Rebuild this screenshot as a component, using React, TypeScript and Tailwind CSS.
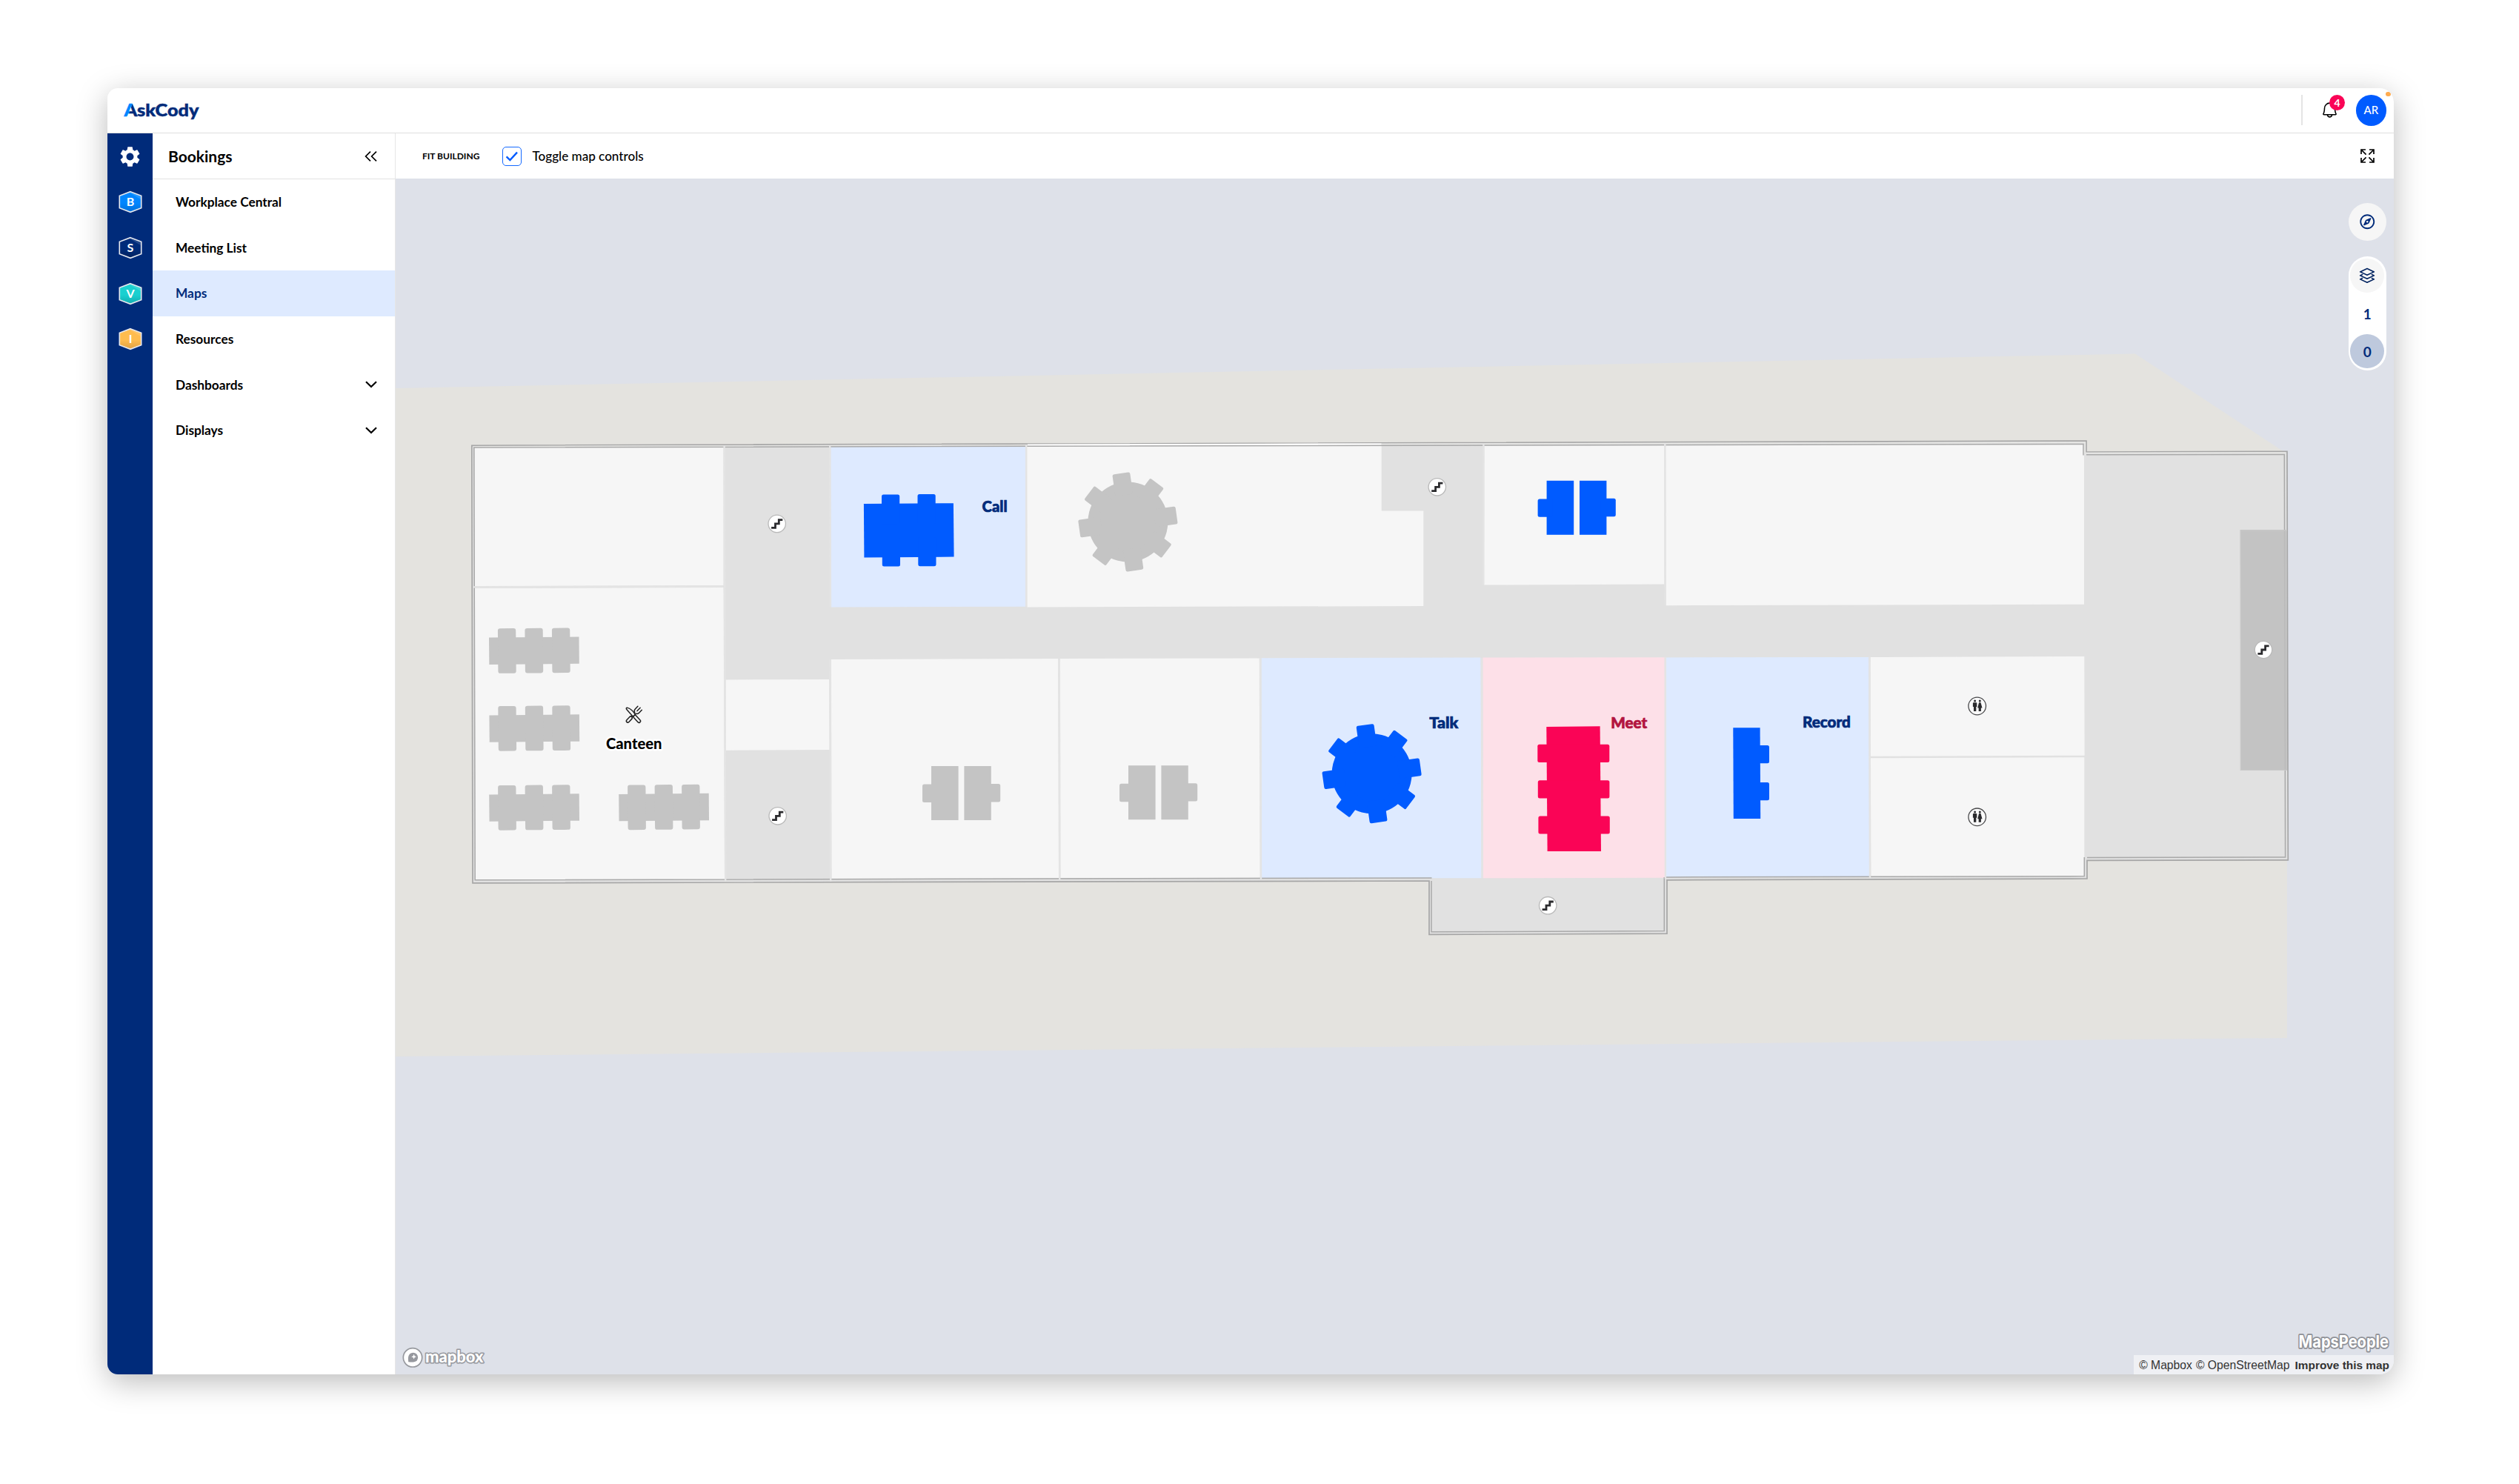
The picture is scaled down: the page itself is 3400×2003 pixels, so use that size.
import React from "react";
import { MdSettings } from "react-icons/md";
import { FaRegCompass } from "react-icons/fa";
import { PiBell } from "react-icons/pi";

const GRAY = "#c4c4c4";
const BLUE = "#005bff";
const RED = "#fa0456";

function Hexagon({ id, letter, from, to }: { id: string; letter: string; from: string; to: string }) {
  return (
    <svg width="32" height="31" viewBox="-16 -15.5 32 31">
      <defs>
        <linearGradient id={id} x1="0" y1="0" x2="0" y2="1">
          <stop offset="0.55" stopColor={from} />
          <stop offset="1" stopColor={to} />
        </linearGradient>
      </defs>
      <path d="M0 -13.8 L14.7 -8.3 V8.3 L0 13.8 L-14.7 8.3 V-8.3 Z" fill={`url(#${id})`} />
      <path d="M0 -13.8 L14.7 -8.3 V-3 L-2 -13 Z" fill="#fff" opacity="0.14" />
      <path d="M0 -13.8 L14.7 -8.3 V8.3 L0 13.8 L-14.7 8.3 V-8.3 Z" fill="none" stroke="#e6e8ee" strokeWidth="1.6" />
      <text x="0" y="5.9" textAnchor="middle" fill="#fff" className="font-['Lato'] text-[16px] font-bold">
        {letter}
      </text>
    </svg>
  );
}

function Chevron() {
  return (
    <svg width="16" height="10" viewBox="0 0 16 10" fill="none" stroke="#000" strokeWidth="2.2">
      <path d="M1 1.2 L8 8 L15 1.2" />
    </svg>
  );
}

function NavItem({ label, active, expandable }: { label: string; active?: boolean; expandable?: boolean }) {
  return (
    <div
      className={
        active
          ? "flex h-[61.6px] items-center justify-between bg-[#deeaff] pl-[31px] pr-[24.5px] text-[#002b7a]"
          : "flex h-[61.6px] items-center justify-between pl-[31px] pr-[24.5px] text-black"
      }
    >
      <span className="text-[17.3px] font-bold leading-none">{label}</span>
      {expandable && <Chevron />}
    </div>
  );
}

function Table3({ x, y }: { x: number; y: number }) {
  return (
    <g transform={`translate(${x} ${y}) rotate(-0.5)`} fill={GRAY}>
      <rect width="121.5" height="36.3" />
      {[12, 48.5, 85].map((sx) => (
        <rect key={sx} x={sx} y="-12.2" width="24.3" height="60.6" rx="3" />
      ))}
    </g>
  );
}

function DeskPair({ x, y, fill }: { x: number; y: number; fill: string }) {
  return (
    <g transform={`translate(${x} ${y})`} fill={fill}>
      <rect x="12" width="36.6" height="73" />
      <rect x="56.4" width="36.4" height="73" />
      <rect x="0" y="24.6" width="20" height="24.4" rx="2.5" />
      <rect x="85" y="24" width="20.2" height="24.4" rx="2.5" />
    </g>
  );
}

function RoundTable({ x, y, fill }: { x: number; y: number; fill: string }) {
  return (
    <g transform={`translate(${x} ${y}) rotate(-8)`} fill={fill}>
      <circle r="54" />
      {[0, 90, 180, 270].map((a) => (
        <rect key={a} x="-12" y="-66.3" width="24" height="30" rx="2.5" transform={`rotate(${a})`} />
      ))}
      {[45, 135, 225, 315].map((a) => (
        <rect key={a} x="-11.6" y="-65.4" width="23.2" height="30" rx="2" transform={`rotate(${a})`} />
      ))}
    </g>
  );
}

function Stairs({ x, y }: { x: number; y: number }) {
  return (
    <g transform={`translate(${x} ${y})`}>
      <circle r="11.7" fill="#fff" stroke="#b9b9b9" strokeWidth="1.3" />
      <path d="M-7.6 5.4 H-2.2 V0 H2.6 V-5.2 H7.6" fill="none" stroke="#2b2b2e" strokeWidth="2.8" />
    </g>
  );
}

function Restroom({ x, y }: { x: number; y: number }) {
  return (
    <g transform={`translate(${x} ${y})`} fill="#2b2b2e">
      <circle r="11.8" fill="#fafafa" stroke="#4a4a4c" strokeWidth="1.3" />
      <circle cx="-3.1" cy="-6.9" r="1.5" />
      <path d="M-5 -4.7 H-1.2 Q-0.4 -4.7 -0.4 -4 V1 H-1.4 V7 H-4.7 V1 H-5.8 V-4 Q-5.8 -4.7 -5 -4.7 Z" />
      <circle cx="3.6" cy="-6.9" r="1.5" />
      <path d="M2.4 -4.7 H4.8 L6.8 2.4 H5.2 V7 H2 V2.4 H0.5 Z" />
    </g>
  );
}

function Cutlery() {
  return (
    <g transform="translate(855 965)" fill="#f6f6f6" stroke="#222" strokeWidth="1.5" strokeLinejoin="round" strokeLinecap="round">
      <g transform="rotate(43)">
        <rect x="-2" y="3.5" width="4" height="9.6" rx="2" />
        <path d="M-1.1 3 V-3.6 Q-3.7 -4.6 -3.7 -7.4 V-12.6 M1.1 3 V-3.6 Q3.7 -4.6 3.7 -7.4 V-12.6" />
        <path d="M0 -7.4 V-13.4" fill="none" />
      </g>
      <g transform="rotate(-42)">
        <path d="M-1.9 1.2 V-11 C-1.9 -13.6 -0.4 -14 0.6 -12.4 C2.8 -9 3.2 -4 2.2 1.2 Z" />
        <rect x="-2" y="1.2" width="4" height="12" rx="1.9" />
      </g>
    </g>
  );
}

function FloorMap() {
  return (
    <svg width="2697" height="1614" viewBox="534 241 2697 1614" className="block">
      <path d="M534 524 L2700 481 L2882 477.5 L3080 608 L3087 612 V1401 L534 1426 Z" fill="#e4e3df" />
      <path
        d="M636.8 601.3 L2816 595 V610 L3087 609.3 L3088.3 1160.8 L2817 1161.3 V1186 L2250 1187.8 V1260.2 L1929 1261.4 V1189 L638 1191.8 Z"
        fill="#e1e1e1"
        stroke="#a6a6a6"
        strokeWidth="1.7"
      />
      <path d="M638.5 602.7 L2814.4 597 V611.5 L3085.3 611" fill="none" stroke="#e6e6e4" strokeWidth="1.6" />
      <g fill="#f6f6f6">
        <path d="M640.5 604 L976.5 603 V790 L640.5 791 Z" />
        <path d="M641 794 L976.5 793 L978 1187 L641.5 1187.5 Z" />
        <path d="M979.7 917.5 L1119 917 L1119.5 1012 L979.7 1012.7 Z" />
        <path d="M1386 602 L1864.7 601 V689.5 H1921.3 V818 L1386.4 819.4 Z" />
        <path d="M2003.5 600.5 H2246.4 V788.6 L2003.2 789.5 Z" />
        <path d="M2248.3 600 L2813 599.5 V815.8 L2248.8 817.2 Z" />
        <path d="M1122 890 L1428 889 L1429 1186 H1122.5 Z" />
        <path d="M1431 889 L1699.7 888.5 L1700.7 1185.3 H1431.5 Z" />
        <path d="M2524.6 887 L2813.3 886 L2813.6 1019.7 L2525 1020.7 Z" />
        <path d="M2525 1023.3 L2813.3 1022.3 V1182.5 L2525.4 1183.3 Z" />
      </g>
      <g fill="#deeaff">
        <path d="M1121.3 603 L1384.3 602.3 V818.8 L1121.7 819.4 Z" />
        <path d="M1702.5 888.3 L1998.5 887.6 L1999.5 1185.3 H1703 Z" />
        <path d="M2248.6 887.4 L2522 887 L2523 1183.3 L2249 1183.8 Z" />
      </g>
      <path d="M2001.4 887.6 L2246.7 887.2 L2247 1184.8 L2002 1185.3 Z" fill="#fde0e8" />

      <g fill="none" stroke="#a9a9a9" strokeWidth="1.5">
        <path d="M2816 613.8 L3083.3 613.4 L3084.6 1156.9 L2817 1157.4" />
        <path d="M2813.3 1157 V1182.6 L2249 1183.9 M2246.3 1184 V1256.6 L1932 1257.8 V1189" />
        <path d="M1932.5 1184.9 L641.2 1187.7 L639.8 603.9 L2812 599.5 V614.5" />
      </g>
      <path d="M1387 600.4 L1864.5 599.3" stroke="#fff" strokeWidth="1.8" />
      <g stroke="#e4e4e4" strokeWidth="2.4">
        <path d="M977.6 601 L979.2 1190 M1120.2 601 L1121 819 M1120.6 890 L1121.2 1190 M1385.2 600 V819" />
        <path d="M1429.7 889 L1430.2 1188 M1701.3 888 L1702 1187 M2000 888 L2000.8 1185 M2002.4 599 L2002.2 789" />
        <path d="M2247.3 598 L2247.7 817 M2247.9 887 V1186 M2523.4 887 L2524 1185.6 M638.5 792.4 L976 791.5" />
      </g>
      <path d="M3023.7 715 H3087 V1040 H3024.3 Z" fill="#bdbdbd" fillOpacity="0.84" />
      <path d="M3087 716 L3024.2 716 V1039.5 H3087" fill="none" stroke="#cacaca" strokeWidth="1.2" />

      <Table3 x={660} y={860.6} />
      <Table3 x={660.4} y={965.4} />
      <Table3 x={660.2} y={1072.4} />
      <Table3 x={835.2} y={1071.9} />
      <DeskPair x={1245} y={1034} fill={GRAY} />
      <DeskPair x={1511} y={1033.2} fill={GRAY} />
      <RoundTable x={1522.4} y={704.5} fill={GRAY} />

      <DeskPair x={2075.6} y={648.8} fill={BLUE} />
      <RoundTable x={1851.6} y={1044.2} fill={BLUE} />
      <g fill={BLUE}>
        <path d="M1165.9 680 L1286.9 679.2 L1287.6 751.6 L1166.4 752.6 Z" />
        <rect x="1190" y="667.5" width="24.2" height="40" rx="2.5" />
        <rect x="1238.5" y="667" width="24.2" height="40" rx="2.5" />
        <rect x="1190.8" y="725" width="24.2" height="39.6" rx="2.5" />
        <rect x="1239.3" y="725" width="24.2" height="39.2" rx="2.5" />
        <path d="M2339.3 982.2 H2375.6 L2376.2 1105 H2339.8 Z" />
        <rect x="2360" y="1006" width="28" height="24.3" rx="2.5" />
        <rect x="2360" y="1056" width="28" height="24.3" rx="2.5" />
      </g>
      <g fill={RED}>
        <path d="M2087.3 981 L2159.6 980.2 L2161 1149 H2088.6 Z" />
        <rect x="2075.3" y="1004.8" width="97" height="24.2" rx="2.5" />
        <rect x="2075.8" y="1053.2" width="96.6" height="24.2" rx="2.5" />
        <rect x="2076.4" y="1101.4" width="96.4" height="24.2" rx="2.5" />
      </g>

      <Stairs x={1048.7} y={706.9} />
      <Stairs x={1049.7} y={1101.3} />
      <Stairs x={1939.8} y={657.3} />
      <Stairs x={2089.2} y={1222.2} />
      <Stairs x={3055} y={877} />
      <Restroom x={2668.7} y={953} />
      <Restroom x={2668.7} y={1102.8} />
      <Cutlery />

      <g className="font-['Lato'] text-[20.7px] font-black" strokeWidth="0.7">
        <text x="818" y="1011.3" textLength="75.5" lengthAdjust="spacingAndGlyphs" className="text-[21.4px]" fill="#000" stroke="#fff" strokeWidth="5" strokeLinejoin="round" paintOrder="stroke">
          Canteen
        </text>
        <text x="1325.6" y="691" textLength="34" lengthAdjust="spacingAndGlyphs" fill="#002b7a" stroke="#002b7a">Call</text>
        <text x="1929.3" y="983.2" textLength="39" lengthAdjust="spacingAndGlyphs" fill="#002b7a" stroke="#002b7a">Talk</text>
        <text x="2174.3" y="982.8" textLength="49" lengthAdjust="spacingAndGlyphs" fill="#b2153f" stroke="#b2153f">Meet</text>
        <text x="2432.9" y="982" textLength="65" lengthAdjust="spacingAndGlyphs" fill="#002b7a" stroke="#002b7a">Record</text>
      </g>
    </svg>
  );
}

function MapboxLogo() {
  return (
    <svg width="114" height="32" viewBox="0 0 114 32" className="overflow-visible">
      <circle cx="15" cy="15.3" r="12.7" fill="#fff" stroke="#96989e" strokeWidth="1.7" />
      <path d="M9.2 21.2 C8.6 16 8.9 12.6 11.2 10.3 A6.6 6.6 0 0 1 20.6 19.5 C18 21.8 14.4 21.9 9.2 21.2 Z" fill="#96989e" />
      <path d="M16.6 10.8 L17.6 13.2 L20 14.2 L17.6 15.2 L16.6 17.6 L15.6 15.2 L13.2 14.2 L15.6 13.2 Z" fill="#fff" />
      <text x="32" y="22" textLength="78.5" lengthAdjust="spacingAndGlyphs" fill="#fff" stroke="#96989e" strokeWidth="3.2" strokeLinejoin="round" paintOrder="stroke" className="font-['Lato'] text-[22.5px] font-black">
        mapbox
      </text>
    </svg>
  );
}

function Layers() {
  return (
    <svg width="24" height="24" viewBox="0 0 24 24" fill="none" stroke="#00225f" strokeWidth="1.6" strokeLinejoin="round" strokeLinecap="round">
      <path d="M12 2.6 L21.4 6.9 L12 11.3 L2.6 6.9 Z" />
      <path d="M5.6 10.5 L2.6 11.9 L12 16.3 L21.4 11.9 L18.4 10.5" />
      <path d="M5.6 15.5 L2.6 16.9 L12 21.3 L21.4 16.9 L18.4 15.5" />
    </svg>
  );
}

export default function App() {
  return (
    <div className="h-[2003px] w-[3400px] overflow-hidden bg-white pl-[145px] pt-[119px] font-['Lato',sans-serif]">
      <div className="flex h-[1736px] w-[3086px] flex-col overflow-hidden rounded-l-[14px] rounded-r-[19px] bg-white shadow-[0_10px_42px_rgba(0,0,0,0.27)]">
        <header className="relative flex h-[61px] shrink-0 items-center justify-between border-b border-[#dfdfdf] pl-[20px] pr-[10px]">
          <svg width="110" height="40" viewBox="0 0 110 40">
            <defs>
              <linearGradient id="brand" gradientUnits="userSpaceOnUse" x1="0" y1="22" x2="20" y2="29">
                <stop offset="0.44" stopColor="#0086ff" />
                <stop offset="0.45" stopColor="#002b7a" />
              </linearGradient>
            </defs>
            <text x="2.4" y="28.3" fill="url(#brand)" stroke="url(#brand)" strokeWidth="0.5" textLength="101" lengthAdjust="spacingAndGlyphs" className="font-['Lato'] text-[23.3px] font-black">
              AskCody
            </text>
          </svg>
          <div className="flex items-center">
            <div className="h-[41px] w-[2px] bg-[#e4e4e4]" />
            <div className="relative ml-[24px] flex h-[26px] w-[26px] items-center justify-center">
              <PiBell size={25} color="#000" />
              <span className="absolute left-[12.5px] top-[-7.5px] flex h-[21px] w-[21px] items-center justify-center rounded-full bg-[#fa0456] text-[14px] font-bold leading-none text-white">
                4
              </span>
            </div>
            <div className="ml-[22px] flex h-[41.4px] w-[41.4px] items-center justify-center rounded-full bg-[#005bff] text-[15px] font-medium leading-none text-white">
              AR
            </div>
          </div>
          <span className="absolute right-[4.5px] top-[4.5px] h-[6.6px] w-[6.6px] rounded-full bg-[#ffab4f]" />
        </header>

        <div className="flex min-h-0 flex-1">
          <aside className="flex w-[61px] shrink-0 flex-col items-center bg-[#002b7a] pt-[0.5px]">
            <div className="flex h-[61.6px] items-center justify-center">
              <MdSettings size={33} color="#fff" />
            </div>
            <div className="flex h-[61.6px] items-center">
              <Hexagon id="hex-b" letter="B" from="#0086ff" to="#0070da" />
            </div>
            <div className="flex h-[61.6px] items-center">
              <Hexagon id="hex-s" letter="S" from="#002b7a" to="#00215f" />
            </div>
            <div className="flex h-[61.6px] items-center">
              <Hexagon id="hex-v" letter="V" from="#1ad0d0" to="#12acb0" />
            </div>
            <div className="flex h-[61.6px] items-center">
              <Hexagon id="hex-i" letter="I" from="#ffbc4f" to="#dfa043" />
            </div>
          </aside>

          <nav className="flex w-[328px] shrink-0 flex-col border-r border-[#e6e6e6] pt-[0.5px]">
            <div className="flex h-[61.6px] shrink-0 items-center justify-between border-b border-[#e2e2e2] pl-[21px] pr-[24px]">
              <span className="text-[21px] font-bold leading-none">Bookings</span>
              <svg width="17" height="14" viewBox="0 0 17 14" fill="none" stroke="#000" strokeWidth="1.7">
                <path d="M8 0.6 L1.6 7 L8 13.4 M16 0.6 L9.6 7 L16 13.4" />
              </svg>
            </div>
            <NavItem label="Workplace Central" />
            <NavItem label="Meeting List" />
            <NavItem label="Maps" active />
            <NavItem label="Resources" />
            <NavItem label="Dashboards" expandable />
            <NavItem label="Displays" expandable />
          </nav>

          <main className="flex min-w-0 flex-1 flex-col">
            <div className="flex h-[61px] shrink-0 items-center pl-[36px] pr-[26px]">
              <span className="w-[107.5px] whitespace-nowrap text-[12px] font-bold leading-none">FIT BUILDING</span>
              <span className="flex h-[26px] w-[26px] items-center justify-center rounded-[5px] border-[1.5px] border-[#1469ff]">
                <svg width="18" height="14" viewBox="0 0 18 14" fill="none" stroke="#005bff" strokeWidth="2.4">
                  <path d="M1.6 7.4 L6.4 12 L16 1.6" />
                </svg>
              </span>
              <span className="ml-[15px] text-[17.1px] font-medium leading-none">Toggle map controls</span>
              <svg className="ml-auto" width="19" height="19" viewBox="0 0 19 19" fill="none" stroke="#000" strokeWidth="1.7">
                <path d="M1 7 V1 H7 M1 1 L7.6 7.6 M12 1 H18 V7 M18 1 L11.4 7.6 M1 12 V18 H7 M1 18 L7.6 11.4 M18 12 V18 H12 M18 18 L11.4 11.4" />
              </svg>
            </div>

            <div className="relative min-h-0 flex-1 overflow-hidden bg-[#dee1e9]">
              <FloorMap />
              <div className="absolute right-[10px] top-[33px] flex flex-col items-center gap-[21px]">
                <div className="flex h-[51.4px] w-[51.4px] items-center justify-center rounded-full bg-[#f6f6f6]">
                  <FaRegCompass size={20.5} color="#002b7a" />
                </div>
                <div className="flex w-[51.4px] flex-col items-center rounded-full bg-white p-[2.6px] text-[19px] font-bold leading-none text-[#002b7a]">
                  <div className="flex h-[46.2px] w-[46.2px] items-center justify-center rounded-full bg-[#f6f6f6]">
                    <Layers />
                  </div>
                  <div className="flex h-[56px] items-center">1</div>
                  <div className="flex h-[46.2px] w-[46.2px] items-center justify-center rounded-full bg-[#bec9dd]">0</div>
                </div>
              </div>
              <div className="absolute bottom-[6.5px] left-[8px]">
                <MapboxLogo />
              </div>
              <div className="absolute bottom-0 right-0 flex flex-col items-end">
                <svg width="140" height="41" viewBox="-8 -8 140 41" className="overflow-visible">
                  <text x="3.5" y="22.5" textLength="121.5" lengthAdjust="spacingAndGlyphs" fill="#fff" stroke="#8e9096" strokeWidth="3.6" strokeLinejoin="round" paintOrder="stroke" className="font-['Inter'] text-[23.5px] font-bold">
                    MapsPeople
                  </text>
                </svg>
                <div className="flex h-[26px] items-center whitespace-nowrap bg-white/50 pl-[7px] pr-[6px] pt-px font-['Liberation_Sans'] text-[15.7px] leading-none text-[#333]">
                  <span>© Mapbox</span>
                  <span className="ml-[5px]">© OpenStreetMap</span>
                  <span className="ml-[7px] text-[15.4px] font-bold">Improve this map</span>
                </div>
              </div>
            </div>
          </main>
        </div>
      </div>
    </div>
  );
}
